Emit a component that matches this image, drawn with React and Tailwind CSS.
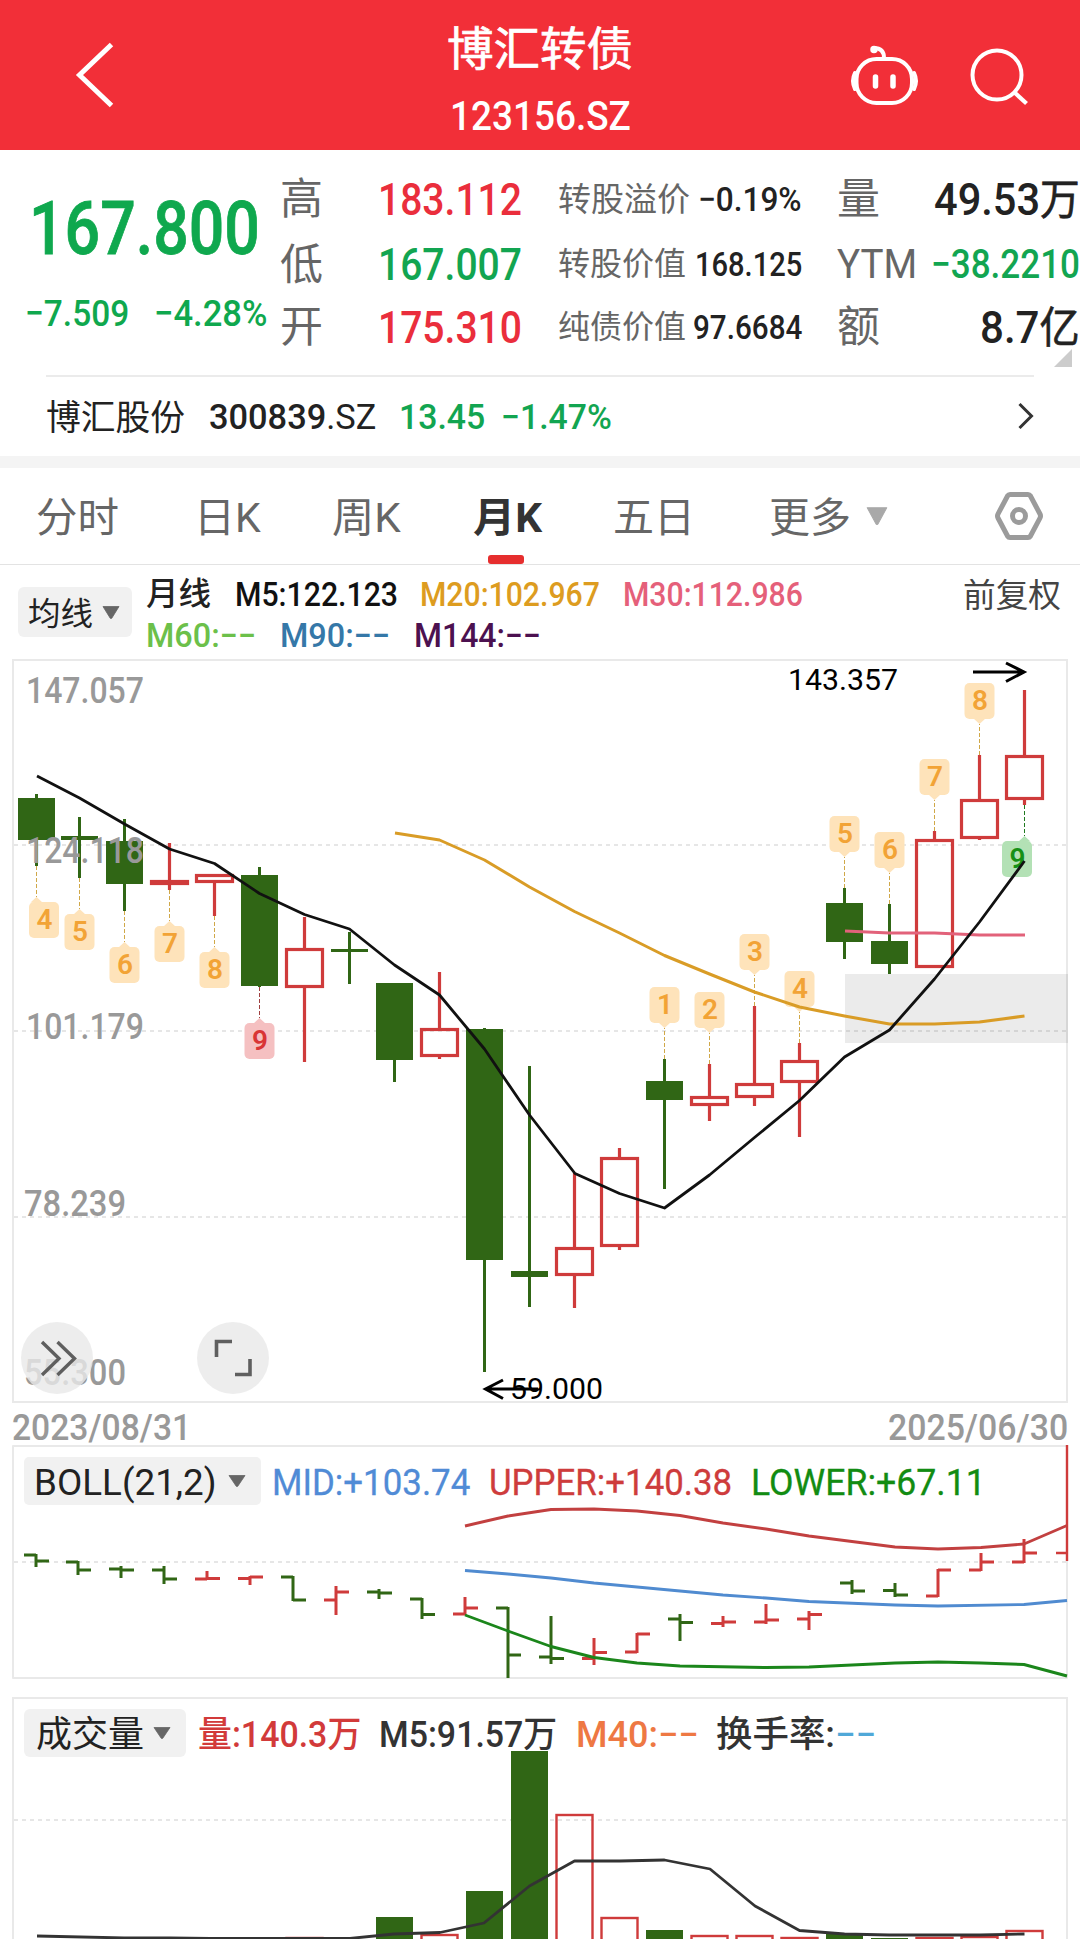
import { useLayoutEffect, useRef, useState } from "react";

/* Single line of text condensed or widened to an exact width. */
function Fit({ w, className = "", children }) {
  const ref = useRef(null);
  const [scale, setScale] = useState(1);
  useLayoutEffect(() => {
    setScale(w / ref.current.offsetWidth);
  }, [w]);
  return (
    <span className={`block shrink-0 whitespace-nowrap leading-none ${className}`} style={{ width: w }}>
      <span ref={ref} className="inline-block origin-left leading-none" style={{ transform: `scaleX(${scale})` }}>
        {children}
      </span>
    </span>
  );
}

function Caret({ className, w = 18, h = 12 }) {
  return (
    <svg width={w} height={h} viewBox="0 0 18 12" preserveAspectRatio="none" className={`shrink-0 ${className}`}>
      <path d="M1 .5H17L9.8 11.2Q9 12 8.2 11.2Z" fill="currentColor" stroke="currentColor" strokeWidth=".8" strokeLinejoin="round" />
    </svg>
  );
}

function Header() {
  return (
    <header className="flex h-[150px] items-start bg-[#f22f38] text-white">
      <svg width="444" height="150" className="shrink-0" fill="none" stroke="currentColor">
        <path d="M111.500 44.500L79.500 75L111.500 105.500" strokeWidth="5" />
      </svg>
      <div className="flex w-[192px] flex-col items-center">
        <Fit w={186} className="mt-[26px] text-[46px] [-webkit-text-stroke:0.7px_white]">博汇转债</Fit>
        <Fit w={181} className="mt-[24px] text-[41px] font-medium">123156.SZ</Fit>
      </div>
      <svg width="444" height="150" viewBox="636 0 444 150" className="shrink-0" fill="none" stroke="currentColor" strokeLinecap="round">
        <rect x="856.500" y="59" width="55.500" height="44" rx="20" strokeWidth="4" />
        <path d="M855 73Q851 81 855 89M914 73Q918 81 914 89" strokeWidth="4" />
        <path d="M874 48Q884 48 884 58" strokeWidth="4" />
        <circle cx="874" cy="49.500" r="3" fill="currentColor" strokeWidth="1.500" />
        <path d="M875.500 77V86M893 77V86" strokeWidth="5.500" />
        <circle cx="997" cy="75" r="24.500" strokeWidth="4" />
        <path d="M1014 92L1026.500 103.500" strokeWidth="4.200" strokeLinecap="butt" />
      </svg>
    </header>
  );
}

function Quote() {
  return (
    <section className="h-[225px]">
      <div className="flex">
        <div className="w-[280px] shrink-0 text-[#0fa84e]">
          <Fit w={231} className="ml-[29px] mt-[42px] text-[74px] font-medium [-webkit-text-stroke:0.8px_#0fa84e]">167.800</Fit>
          <div className="mt-[29px] flex">
            <Fit w={104} className="ml-[25px] text-[37px] font-medium">−7.509</Fit>
            <Fit w={113} className="ml-[25px] text-[37px] font-medium">−4.28%</Fit>
          </div>
        </div>
        <div className="grid grid-cols-[98px_180px_244px_35px_243px] grid-rows-[64px_66px_60px] items-center pt-[17px] text-[#666]">
          <Fit w={43} className="pt-px text-[43px]">高</Fit>
          <Fit w={144} className="text-[45px] font-medium text-[#ea2e3c]">183.112</Fit>
          <div className="flex items-center justify-between">
            <Fit w={132} className="text-[33px]">转股溢价</Fit>
            <Fit w={104} className="text-[34px] font-medium text-[#222]">−0.19%</Fit>
          </div>
          <i />
          <div className="flex items-center justify-between">
            <Fit w={43} className="pt-px text-[43px]">量</Fit>
            <Fit w={146} className="text-[45px] font-medium text-[#222]">49.53<span className="text-[43px] font-normal [-webkit-text-stroke:0.6px_#222]">万</span></Fit>
          </div>

          <Fit w={43} className="pt-[3px] text-[43px]">低</Fit>
          <Fit w={144} className="pt-px text-[45px] font-medium text-[#12a551]">167.007</Fit>
          <div className="flex items-center justify-between">
            <Fit w={128} className="text-[32px]">转股价值</Fit>
            <Fit w={107} className="text-[34px] font-medium text-[#222]">168.125</Fit>
          </div>
          <i />
          <div className="flex items-center justify-between">
            <Fit w={80} className="pt-px text-[40px]">YTM</Fit>
            <Fit w={149} className="pt-px text-[40px] font-medium text-[#12a551]">−38.2210</Fit>
          </div>

          <Fit w={43} className="text-[43px]">开</Fit>
          <Fit w={144} className="text-[45px] font-medium text-[#ea2e3c]">175.310</Fit>
          <div className="flex items-center justify-between">
            <Fit w={128} className="text-[32px]">纯债价值</Fit>
            <Fit w={109} className="text-[34px] font-medium text-[#222]">97.6684</Fit>
          </div>
          <i />
          <div className="flex items-center justify-between">
            <Fit w={43} className="text-[43px]">额</Fit>
            <Fit w={100} className="text-[45px] font-medium text-[#222]">8.7<span className="text-[43px] font-normal [-webkit-text-stroke:0.6px_#222]">亿</span></Fit>
          </div>
        </div>
      </div>
      <svg width="18" height="18" className="-mt-[8px] ml-[1054px] block"><path d="M18 0V18H0Z" fill="#ccc" /></svg>
    </section>
  );
}

function Underlying() {
  return (
    <section className="mx-[46px] flex h-[81px] items-center border-t-2 border-[#ebebeb] text-[35px] text-[#222]">
      <Fit w={139} className="pt-[3px]">博汇股份</Fit>
      <Fit w={167} className="ml-[24px] pt-[2px] font-medium">300839<span className="font-normal">.SZ</span></Fit>
      <Fit w={86} className="ml-[23px] pt-[2px] font-medium text-[#12a551]">13.45</Fit>
      <Fit w={111} className="ml-[16px] pt-[2px] font-medium text-[#12a551]">−1.47%</Fit>
      <svg width="18" height="28" className="-mt-[2px] ml-auto" fill="none" stroke="#333" strokeWidth="3">
        <path d="M3.500 2L15.500 14L3.500 26" />
      </svg>
    </section>
  );
}

function Tabs() {
  return (
    <nav className="flex h-[97px] items-center border-b border-[#e3e3e3] text-[41px] text-[#666]">
      <Fit w={83} className="ml-[36px] pt-[4px]">分时</Fit>
      <Fit w={67} className="ml-[75px] pt-[4px]">日K</Fit>
      <Fit w={69} className="ml-[71px] pt-[4px]">周K</Fit>
      <div className="relative ml-[72px] flex h-full items-center text-[#333]">
        <Fit w={69} className="pt-[4px] font-bold">月K</Fit>
        <span className="absolute bottom-0 left-[15px] h-[9px] w-[36px] rounded-[3px] bg-[#e62e2e]" />
      </div>
      <Fit w={82} className="ml-[71px] pt-[4px]">五日</Fit>
      <Fit w={82} className="ml-[74px] pt-[4px]">更多</Fit>
      <Caret w={22} h={18} className="ml-[15px] text-[#a9a9a9]" />
      <svg width="50" height="50" className="ml-[106px]" fill="none" stroke="#9b9b9b">
        <path d="M16 3.500H34Q35.500 3.500 36.500 5L46 23Q47 25 46 27L36.500 45Q35.500 46.500 34 46.500H16Q14.500 46.500 13.500 45L4 27Q3 25 4 23L13.500 5Q14.500 3.500 16 3.500Z" strokeWidth="5" />
        <circle cx="25" cy="25" r="6.500" strokeWidth="5" />
      </svg>
    </nav>
  );
}

function Averages() {
  return (
    <div className="flex h-[94px] items-start pl-[18px] text-[33px]">
      <button className="mt-[22px] flex h-[50px] w-[114px] items-center rounded-[6px] bg-[#f1f1f1] pl-[10px] text-[#222]">
        <Fit w={65} className="pt-[3px] text-[32px]">均线</Fit>
        <Caret className="ml-[9px] text-[#666]" h={13} />
      </button>
      <div className="ml-[14px]">
        <div className="mt-[8px] flex h-[42px] items-center font-medium">
          <Fit w={65} className="text-[32px] text-[#222]">月线</Fit>
          <Fit w={163} className="ml-[24px] text-[#111]">M5:122.123</Fit>
          <Fit w={180} className="ml-[22px] text-[#dd9c20]">M20:102.967</Fit>
          <Fit w={180} className="ml-[23px] text-[#e5607a]">M30:112.986</Fit>
        </div>
        <div className="flex h-[40px] items-center font-medium">
          <Fit w={110} className="text-[#6cc04a]">M60:−−</Fit>
          <Fit w={110} className="ml-[24px] text-[#3578a8]">M90:−−</Fit>
          <Fit w={127} className="ml-[24px] text-[#4c1150]">M144:−−</Fit>
        </div>
      </div>
      <Fit w={98} className="ml-auto mr-[19px] mt-[14px] text-[#444]">前复权</Fit>
    </div>
  );
}

const GREEN = "#306615";
const RED = "#cf3b3b";

/* center x, body top, body bottom, high, low, rising */
const CANDLES = [
  [36.5, 798, 840, 794, 866, 0],
  [79.500, 836, 840, 817, 878, 0],
  [124.500, 841, 884, 819, 911, 0],
  [169.500, 880, 885, 843, 890, 1],
  [214.500, 874, 883, 874, 916, 1],
  [259.500, 875, 986, 867, 987, 0],
  [304.500, 948, 988, 917, 1062, 1],
  [349.500, 949, 952, 932, 984, 0],
  [394.500, 983, 1060, 983, 1082, 0],
  [439.500, 1028, 1057, 972, 1059, 1],
  [484.500, 1029, 1260, 1028, 1372, 0],
  [529.500, 1271, 1277, 1066, 1307, 0],
  [574.500, 1247, 1276, 1173, 1308, 1],
  [619.500, 1157, 1247, 1148, 1250, 1],
  [664.500, 1081, 1100, 1059, 1189, 0],
  [709.500, 1096, 1106, 1064, 1121, 1],
  [754.500, 1083, 1098, 1006, 1106, 1],
  [799.500, 1060, 1083, 1043, 1137, 1],
  [844.500, 903, 942, 888, 959, 0],
  [889.500, 941, 964, 904, 974, 0],
  [934.500, 839, 968, 831, 968, 1],
  [979.500, 799, 839, 755, 840, 1],
  [1024.500, 755, 800, 690, 805, 1],
];

/* digit, pointer x, box left, box top, points up, wick end, tone */
const MARKS = [
  ["4", 36.5, 29, 902, 1, 866, "o"],
  ["5", 79.500, 64.500, 914, 1, 878, "o"],
  ["6", 124.500, 109.500, 947, 1, 911, "o"],
  ["7", 169.500, 154.500, 926, 1, 890, "o"],
  ["8", 214.500, 199.500, 952, 1, 916, "o"],
  ["9", 259.500, 244.500, 1023, 1, 987, "r"],
  ["1", 664.500, 649.500, 987, 0, 1059, "o"],
  ["2", 709.500, 694.500, 992, 0, 1064, "o"],
  ["3", 754.500, 739.500, 934, 0, 1006, "o"],
  ["4", 799.500, 784.500, 971, 0, 1043, "o"],
  ["5", 844.500, 829.500, 816, 0, 888, "o"],
  ["6", 889.500, 874.500, 832, 0, 904, "o"],
  ["7", 934.500, 919.500, 759, 0, 831, "o"],
  ["8", 979.500, 964.500, 683, 0, 755, "o"],
  ["9", 1024.500, 1002, 841, 1, 805, "g"],
];

const TONES = {
  o: { fill: "#fee3ba", ink: "#f2a336", dash: "#d0a848" },
  r: { fill: "#f5c0c1", ink: "#d93535", dash: "#a04040" },
  g: { fill: "#b3e1b5", ink: "#169016", dash: "#207a20" },
};

const AXIS = [
  ["147.057", 26, 703, 118],
  ["124.118", 26, 862.5, 118],
  ["101.179", 26, 1039, 118],
  ["78.239", 24, 1216, 102],
  ["55.300", 24, 1385, 102],
];

function Candle({ c: [x, top, bottom, high, low, up] }) {
  if (up) {
    return (
      <g stroke={RED} strokeWidth="3.200" fill="none">
        <path d={`M${x} ${high}V${top}M${x} ${bottom}V${low}`} />
        <rect x={x - 18} y={top + 1.5} width="36" height={Math.max(bottom - top - 3, 1)} />
      </g>
    );
  }
  return (
    <g fill={GREEN}>
      <rect x={x - 1.5} y={high} width="3" height={low - high} />
      <rect x={x - 18.5} y={top} width="37" height={bottom - top} />
    </g>
  );
}

function Mark({ m: [digit, px, x, y, up, end, tone] }) {
  const t = TONES[tone];
  const pointer = up ? `M${px - 6} ${y + 0.5}L${px} ${y - 5}L${px + 6} ${y + 0.5}Z` : `M${px - 6} ${y + 35.5}L${px} ${y + 41}L${px + 6} ${y + 35.5}Z`;
  return (
    <g>
      <path d={up ? `M${px} ${end}V${y - 5}` : `M${px} ${end}V${y + 41}`} stroke={t.dash} strokeDasharray="4 2" />
      <rect x={x} y={y} width="30" height="36" rx="5" fill={t.fill} />
      <path d={pointer} fill={t.fill} />
      <text x={x + 15.5} y={y + 27} textAnchor="middle" fontSize="28" fontWeight="600" fill={t.ink}>{digit}</text>
    </g>
  );
}

function KLine() {
  return (
    <div className="relative h-[744px]">
      <svg width="1080" height="744" viewBox="0 659 1080 744" className="block" fill="none">
        <rect x="13" y="660" width="1054" height="742" stroke="#e9e9e9" strokeWidth="2" />
        <path d="M14 845H1066M14 1031H1066M14 1217H1066" stroke="#e6e6e6" strokeWidth="2" strokeDasharray="4 4" />
        {CANDLES.map((c) => <Candle key={c[0]} c={c} />)}
        {MARKS.map((m) => <Mark key={m[1]} m={m} />)}
        <rect x="845" y="974" width="223" height="69" fill="#000" fillOpacity=".08" />
        <g strokeWidth="3" strokeLinejoin="round">
          <path stroke="#d99c26" d="M395 833L439.500 840L484.500 860L529.500 887L574.500 911.500L619.500 933L664.500 955.500L709.500 974L754.500 992L799.500 1007L844.500 1016L889.500 1024L934.500 1024L979.500 1022L1024.500 1016" />
          <path stroke="#e2627a" d="M845 931L889.500 933L934.500 933L979.500 935H1025" />
          <path stroke="#111" strokeWidth="2.800" d="M37 776L79.500 798L124.500 824L169.500 849L214.500 863.500L259.500 893.500L304.500 914.500L349.500 929L394.500 965L439.500 995L484.500 1049L529.500 1115L575 1173.500L619.500 1193.500L664.500 1208L709.500 1175L754.500 1137.500L799.500 1100.500L844.500 1057L889.500 1030L934.500 979L979.500 922L1024.500 861" />
        </g>
        <g fill="#999" fontSize="37" fontWeight="500">
          {AXIS.map(([label, x, y, w]) => (
            <text key={label} x={x} y={y} textLength={w} lengthAdjust="spacingAndGlyphs">{label}</text>
          ))}
        </g>
        <g fill="#000" fontSize="30">
          <text x="788" y="690" textLength="110" lengthAdjust="spacingAndGlyphs">143.357</text>
          <text x="510" y="1399" textLength="93" lengthAdjust="spacingAndGlyphs">59.000</text>
        </g>
        <g stroke="#000" strokeWidth="3">
          <path d="M973 672H1023M1006 663L1024 672L1006 681.500" />
          <path d="M538 1389H486M503 1380L485.500 1389L503 1398.500" />
        </g>
      </svg>
      <button className="absolute bottom-[9px] left-[21px] size-[72px] rounded-full bg-[#e8e8e8]/80">
        <svg width="72" height="72" fill="none" stroke="#5f5f5f" strokeWidth="3.400"><path d="M21 20L38 36.500L21 53M36.500 20L53.500 36.500L36.500 53" /></svg>
      </button>
      <button className="absolute bottom-[9px] left-[197px] size-[72px] rounded-full bg-[#e8e8e8]/80">
        <svg width="72" height="72" fill="none" stroke="#5f5f5f" strokeWidth="3.600"><path d="M19.500 35V19.500H35M38 52.500H53V37" /></svg>
      </button>
    </div>
  );
}

/* x, open, close, high, low, rising */
const BARS = [
  [36, 1555, 1561, 1554, 1567, 0], [78, 1562, 1570, 1561, 1575, 0], [121, 1569, 1570, 1566, 1578, 0],
  [164, 1570, 1579, 1566, 1584, 0], [207, 1579, 1578.5, 1571, 1580, 1], [250, 1578.5, 1577, 1576, 1585, 1],
  [293, 1577, 1600, 1576, 1601, 0], [336, 1600, 1592, 1586, 1615, 1], [379, 1592, 1593, 1589, 1599, 0],
  [422, 1599, 1614.5, 1598, 1619, 0], [465, 1614, 1608, 1597, 1615, 1], [508, 1608, 1655, 1607, 1678, 0],
  [551, 1657, 1658.5, 1616, 1664, 0], [594, 1658.5, 1652.5, 1638, 1665, 1], [637, 1652, 1634, 1633, 1653, 1],
  [680, 1619, 1622.5, 1614, 1641, 0], [723, 1623.5, 1622, 1616, 1627, 1], [766, 1622, 1620, 1604, 1624, 1],
  [809, 1619, 1614.5, 1611, 1630, 1], [852, 1583, 1591, 1580, 1594, 0], [895, 1590.5, 1595, 1583, 1597, 0],
  [938, 1596, 1570, 1569, 1597, 1], [981, 1570, 1562, 1553, 1571, 1], [1024, 1562, 1553, 1539, 1563, 1],
];

function Boll() {
  return (
    <section className="relative h-[234px]">
      <svg width="1080" height="234" viewBox="0 1445 1080 234" className="absolute inset-0" fill="none" strokeLinejoin="round">
        <rect x="13" y="1446" width="1054" height="232" stroke="#e9e9e9" strokeWidth="2" />
        <path d="M14 1562H1066" stroke="#e6e6e6" strokeWidth="2" strokeDasharray="4 4" />
        {BARS.map(([x, o, c, hi, lo, up]) => (
          <path key={x} d={`M${x - 12} ${o}H${x}M${x} ${hi}V${lo}M${x} ${c}H${x + 13}`} stroke={up ? RED : GREEN} strokeWidth="3" />
        ))}
        <path d="M1056 1553H1067M1067 1445V1561" stroke={RED} strokeWidth="2.400" />
        <g strokeWidth="2.900">
          <path stroke="#c24040" d="M465 1526L508 1516L551 1509.500L594 1509L637 1511L680 1515.500L723 1523L766 1529L809 1536L852 1541.500L895 1547L938 1549L981 1547.500L1024 1544L1067 1525.500" />
          <path stroke="#508bd0" d="M465 1570.500L508 1574L551 1578L594 1583L680 1591L723 1595L766 1598L809 1601.500L895 1605L938 1606L1024 1604.500L1067 1600.500" />
          <path stroke="#1b861b" d="M465 1615L508 1631L551 1646.500L594 1657.500L637 1663L680 1666L766 1667.500L809 1667L895 1663L938 1662L981 1663L1024 1664.500L1067 1676" />
        </g>
      </svg>
      <div className="relative flex items-center pl-[24px] pt-[12px] text-[37px]">
        <button className="flex h-[48px] w-[237px] items-center rounded-[5px] bg-[#f1f1f1] pl-[10px] text-[#222]">
          <Fit w={183} className="pt-[3px]">BOLL(21,2)</Fit>
          <Caret className="ml-[11px] text-[#666]" />
        </button>
        <Fit w={198} className="ml-[11px] pt-[2px] text-[#508bd6] [-webkit-text-stroke:0.3px_#508bd6]">MID:+103.74</Fit>
        <Fit w={243} className="ml-[19px] pt-[2px] text-[#ce3c3c] [-webkit-text-stroke:0.3px_#ce3c3c]">UPPER:+140.38</Fit>
        <Fit w={235} className="ml-[19px] pt-[2px] text-[#128c12] [-webkit-text-stroke:0.3px_#128c12]">LOWER:+67.11</Fit>
      </div>
    </section>
  );
}

/* left, top, rising */
const VOLUMES = [
  [285.5, 1937, 1], [376, 1917, 0], [420.5, 1934, 1], [466, 1891, 0], [511, 1751, 0], [555.5, 1814, 1],
  [600.5, 1917, 1], [646, 1930, 0], [690.5, 1935, 1], [735.5, 1935, 1], [780.5, 1937, 1], [826, 1934, 0],
  [871, 1938, 0], [915.5, 1937, 1], [960.5, 1936, 1], [1005.5, 1930, 1],
];

function Volume() {
  return (
    <section className="relative h-[242px] overflow-hidden">
      <svg width="1080" height="242" viewBox="0 1697 1080 242" className="absolute inset-0" fill="none">
        <path d="M13 1939V1698H1067V1939" stroke="#e9e9e9" strokeWidth="2" />
        <path d="M14 1820H1066" stroke="#e6e6e6" strokeWidth="2" strokeDasharray="4 4" />
        {VOLUMES.map(([x, y, up]) =>
          up ? (
            <rect key={x} x={x + 1} y={y + 1} width="36" height="140" stroke={RED} strokeWidth="2.400" />
          ) : (
            <rect key={x} x={x} y={y} width="37" height="200" fill={GREEN} />
          )
        )}
        <path stroke="#333" strokeWidth="2.800" strokeLinejoin="round" d="M37 1936L124 1938L170 1938L210 1938.500H350L394 1934L440 1932.500L484 1923L529.500 1886L574.500 1861H620L664.500 1860L710 1869L755 1906L799.500 1930.500L844.500 1934L889 1935H980L1024.500 1934" />
      </svg>
      <div className="relative flex items-center pl-[24px] pt-[12px] text-[36px]">
        <button className="flex h-[48px] w-[162px] items-center rounded-[6px] bg-[#f1f1f1] pl-[12px] text-[#222]">
          <Fit w={108} className="pt-[4px]">成交量</Fit>
          <Caret className="ml-[9px] text-[#666]" />
        </button>
        <Fit w={163} className="ml-[12px] pt-[4px] font-medium text-[#d23a3a]">量:140.3万</Fit>
        <Fit w={178} className="ml-[18px] pt-[4px] font-medium text-[#333]">M5:91.57万</Fit>
        <Fit w={122} className="ml-[19px] pt-[4px] font-medium text-[#ee7843]">M40:−−</Fit>
        <Fit w={160} className="ml-[18px] pt-[4px] font-medium text-[#333]">换手率:<span className="text-[#50a8d8]">−−</span></Fit>
      </div>
    </section>
  );
}

export default function App() {
  return (
    <main className="h-[1939px] w-[1080px] overflow-hidden bg-white font-['Roboto','Noto_Sans_CJK_SC',sans-serif]">
      <Header />
      <Quote />
      <Underlying />
      <div className="h-[12px] bg-[#f4f4f4]" />
      <Tabs />
      <Averages />
      <KLine />
      <div className="flex h-[42px] items-center justify-between pl-[12px] pr-[12px] pt-[6px] text-[37px] font-medium text-[#999]">
        <Fit w={179}>2023/08/31</Fit>
        <Fit w={180}>2025/06/30</Fit>
      </div>
      <Boll />
      <div className="h-[18px]" />
      <Volume />
    </main>
  );
}
